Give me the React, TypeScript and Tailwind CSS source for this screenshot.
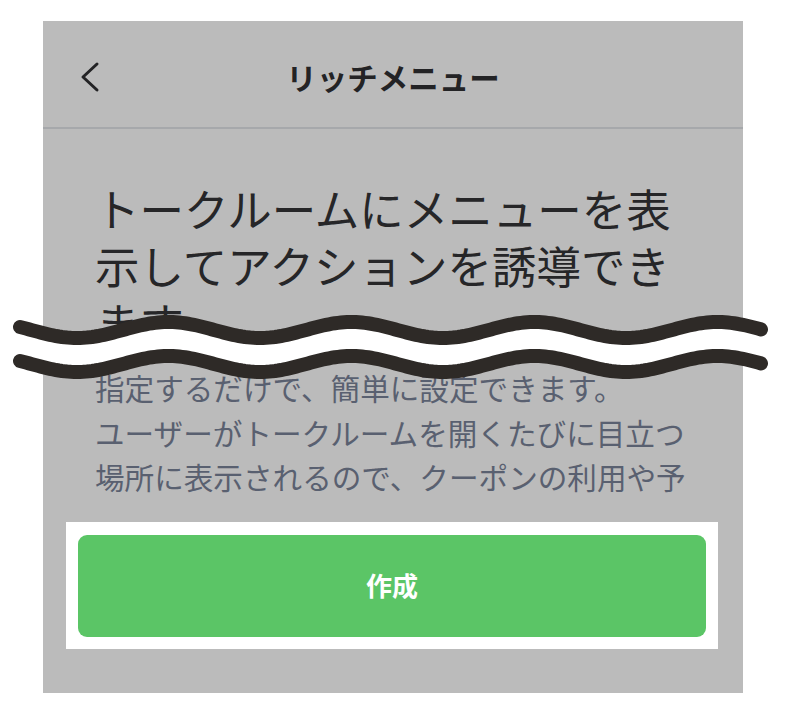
import React from 'react'

// wavy "omitted" marker: centreline of the upper stroke, page coords
function wavePath(dy: number) {
  const pts: string[] = []
  for (let x = 20; x <= 762; x += 3) {
    const y = 330 + dy + 8 * Math.cos((2 * Math.PI * (x - 77)) / 183)
    pts.push(`${x},${y.toFixed(2)}`)
  }
  return pts
}

function WaveBreak() {
  const top = wavePath(0)
  const bottom = wavePath(34)
  const band = `M${top.join(' L')} L${[...bottom].reverse().join(' L')} Z`
  return (
    <svg
      className="absolute left-0 top-[290px] pointer-events-none"
      width="786"
      height="100"
      viewBox="0 290 786 100"
      aria-hidden="true"
    >
      <path d={band} fill="#ffffff" />
      <path d={`M${top.join(' L')}`} fill="none" stroke="#2e2a27" strokeWidth="14" strokeLinecap="round" strokeLinejoin="round" />
      <path d={`M${bottom.join(' L')}`} fill="none" stroke="#2e2a27" strokeWidth="14" strokeLinecap="round" strokeLinejoin="round" />
    </svg>
  )
}

export default function App() {
  return (
    <div
      className="relative w-[786px] h-[714px] bg-white overflow-hidden"
      style={{ fontFamily: '"Noto Sans CJK JP", "Noto Sans", sans-serif' }}
    >
      <div className="ml-[43px] mt-[21px] w-[700px] h-[672px] bg-[#bbbbbb] flex flex-col">
        {/* ── Header ───────────────────────────── */}
        <div className="h-[108px] shrink-0 border-b-2 border-[#a6a8ab] grid grid-cols-[1fr_auto_1fr] items-center pt-1.5">
          <div className="pl-[36px]">
            <svg width="24" height="32" viewBox="0 0 24 32" fill="none">
              <path d="M18 3L4 16l14 13" stroke="#232325" strokeWidth="3" strokeLinecap="round" strokeLinejoin="round" />
            </svg>
          </div>
          <h1 className="text-[30.5px] font-bold text-[#232325] leading-none">リッチメニュー</h1>
          <div />
        </div>

        {/* ── Body ─────────────────────────────── */}
        <div className="flex-1 overflow-hidden pl-[52px] pr-[46px] pt-[50px]">
          <h2 className="text-[44.5px] leading-[57px] text-[#262628] font-normal">
            トークルームにメニューを表示してアクションを誘導できます。
          </h2>
          <p className="mt-4 text-[29.6px] leading-[44.5px] text-[#596070]">
            指定するだけで、簡単に設定できます。
            <br />
            ユーザーがトークルームを開くたびに目立つ場所に表示されるので、クーポンの利用や予
          </p>
        </div>

        {/* ── Footer button (highlighted) ──────── */}
        <div className="shrink-0 pb-[44px]">
          <div className="ml-[23px] w-[652px] bg-white px-3 pt-[13px] pb-[12px]">
            <button className="w-full h-[102px] rounded-[9px] bg-[#5bc566] text-white text-[26px] font-bold pb-1">
              作成
            </button>
          </div>
        </div>
      </div>

      <WaveBreak />
    </div>
  )
}
